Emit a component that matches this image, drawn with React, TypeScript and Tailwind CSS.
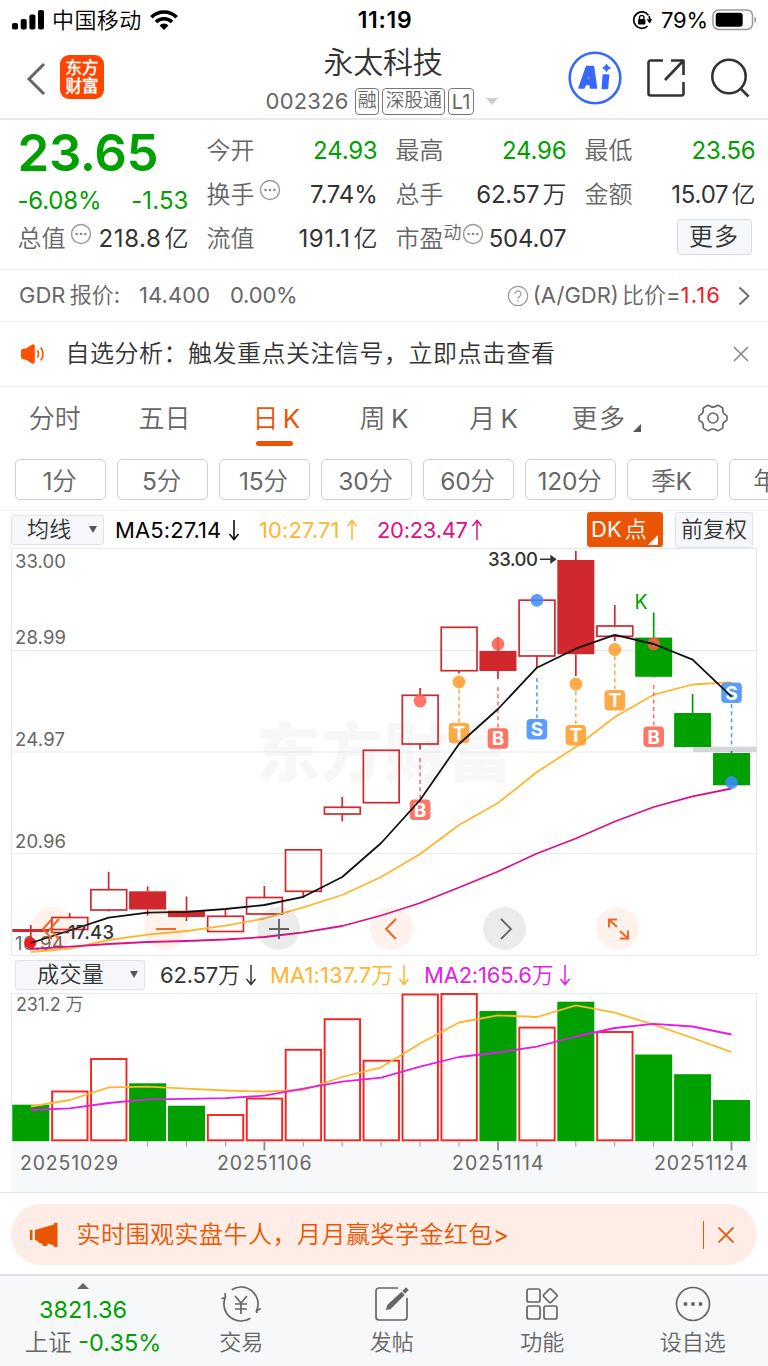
import type { ReactNode } from "react";

const STEP = 38.93;
const X0 = 30.8;
const cx = (i: number) => X0 + i * STEP;

type Candle = { kind: "hollow" | "red" | "green"; top: number; bottom: number; high: number; low: number };

const c = (kind: Candle["kind"], top: number, bottom: number, high = top, low = bottom): Candle => ({
  kind,
  top,
  bottom,
  high,
  low,
});

const candles: Candle[] = [
  c("red", 929, 932, 925, 943),
  c("hollow", 917.5, 929.5, 913),
  c("hollow", 889.7, 910, 872, 911.5),
  c("red", 891.3, 909.5, 886.5, 915.5),
  c("red", 910.7, 917, 896.5, 921),
  c("hollow", 916.3, 931.5, 909.5),
  c("hollow", 897.5, 914, 886),
  c("hollow", 849.8, 891.3, 849, 898),
  c("hollow", 807.3, 814, 797, 821.5),
  c("hollow", 750.3, 802.7),
  c("hollow", 695.3, 744, 688, 749.5),
  c("hollow", 627.3, 670.7, 627, 673.5),
  c("red", 651, 671, 637, 679),
  c("hollow", 600.2, 656, 600, 668),
  c("red", 560, 654.2, 551, 676),
  c("hollow", 626, 636.3, 605, 641),
  c("green", 637.6, 676.8, 612.6, 677.5),
  c("green", 713, 747, 694),
  c("green", 753, 785.3, 751, 787),
];

const ma5 = [943, 930.5, 917.6, 912.6, 911.8, 909, 905, 896.8, 877, 843, 800, 744, 709, 667.7, 648.7, 634.9, 644, 659.7, 696.7];
const ma10 = [952, 948.7, 940, 934.7, 931, 925.7, 918.5, 907.3, 895, 877, 854, 825, 803, 772, 747, 717, 694.7, 684.5, 682.2];
const ma20 = [949, 946.7, 944, 942, 941, 939.5, 937, 932.3, 926, 915.5, 903, 887.5, 871.5, 853.5, 838.5, 821.5, 807, 796.3, 788.5];

const volumes: [Candle["kind"], number][] = [
  ["green", 1104.7],
  ["hollow", 1091.5],
  ["hollow", 1059],
  ["green", 1083.3],
  ["green", 1105.7],
  ["hollow", 1115],
  ["hollow", 1098.6],
  ["hollow", 1049.8],
  ["hollow", 1019.2],
  ["hollow", 1060.7],
  ["hollow", 994.5],
  ["hollow", 994],
  ["green", 1011],
  ["hollow", 1027.6],
  ["green", 1001.7],
  ["hollow", 1032],
  ["green", 1054.5],
  ["green", 1074.2],
  ["green", 1100],
];
const vma1 = [1106.5, 1100, 1087.3, 1086.7, 1088.7, 1090.5, 1091.5, 1090, 1077, 1067.3, 1043.5, 1022.5, 1015.3, 1017, 1005.3, 1012.7, 1024.7, 1038, 1052.2];
const vma2 = [1110, 1108.3, 1103, 1099.3, 1098.8, 1098.2, 1095.7, 1088.7, 1081.7, 1077.7, 1066.7, 1057, 1052.5, 1046.7, 1036.5, 1028, 1023.8, 1026.5, 1034.5];

const line = (ys: number[]) => ys.map((y, i) => `${cx(i).toFixed(1)},${y}`).join(" ");

type Marker = { i: number; letter: "B" | "T" | "S"; y: number; dot: number; from: number; to: number };
const markers: Marker[] = [
  { i: 10, letter: "B", y: 809.7, dot: 701, from: 758, to: 799 },
  { i: 11, letter: "T", y: 733, dot: 682, from: 682, to: 722 },
  { i: 12, letter: "B", y: 738.5, dot: 644, from: 687, to: 728 },
  { i: 13, letter: "S", y: 729.2, dot: 600.3, from: 678, to: 718 },
  { i: 14, letter: "T", y: 735.3, dot: 684, from: 684, to: 724 },
  { i: 15, letter: "T", y: 700.3, dot: 649.5, from: 649, to: 689 },
  { i: 16, letter: "B", y: 736.7, dot: 643.7, from: 685, to: 726 },
  { i: 18, letter: "S", y: 692.7, dot: 782.5, from: 704, to: 745 },
];
const markerColor = { B: "#ff5d4d", T: "#ff9c27", S: "#3c8cff" };

function PriceChart() {
  return (
    <svg viewBox="0 548 768 408" className="block h-[408px] w-[768px]">
      <text x="256" y="776" fontSize="64" fontWeight="900" fill="#f7f7f8" textLength="256" className="font-['Noto_Sans_CJK_SC',sans-serif]">
        东方财富
      </text>
      <g stroke="#e6e9f0" strokeWidth="1.2" fill="none">
        <path d="M11.5 548V956M756.5 548V956M11.5 650.6H756.5M11.5 752H756.5M11.5 853.5H756.5" />
        <path d="M11.5 548.5H756.5M11.5 955.5H756.5" />
      </g>
      <g fontSize="18.500" fill="#666">
        <text x="15" y="568.2" textLength="51">33.00</text>
        <text x="15" y="643.8" textLength="51">28.99</text>
        <text x="15" y="746.3" textLength="50">24.97</text>
        <text x="15" y="848.3" textLength="51">20.96</text>
        <text x="15" y="949.8" textLength="49">16.94</text>
      </g>
      <rect x="693" y="746.7" width="63.5" height="5.3" fill="#d3d5da" />
      {candles.map((k, i) => {
        const color = k.kind === "green" ? "#00a000" : "#d0282c";
        const x = cx(i);
        return (
          <g key={i} stroke={color} strokeWidth="1.7">
            <path d={`M${x} ${k.high}V${k.top}M${x} ${k.bottom}V${k.low}`} />
            {k.kind === "hollow" ? (
              <rect x={x - 17.8} y={k.top} width="35.8" height={k.bottom - k.top} fill="none" />
            ) : (
              <rect x={x - 18.5} y={k.top} width="37" height={k.bottom - k.top} fill={color} stroke="none" />
            )}
          </g>
        );
      })}
      <circle cx="30.5" cy="943" r="5.8" fill="#f6171f" />
      <g fill="none" strokeWidth="1.8" strokeLinejoin="round">
        <polyline points={line(ma10)} stroke="#ffb62e" />
        <polyline points={line(ma20)} stroke="#df0f8a" />
      </g>
      <g opacity="0.85">
        {markers.map((m) => {
          const x = cx(m.i);
          const col = markerColor[m.letter];
          return (
            <g key={m.i}>
              <circle cx={x} cy={m.dot} r="6.4" fill={col} />
              <path d={`M${x} ${m.from}V${m.to}`} stroke={col} strokeWidth="1.6" strokeDasharray="4 3.3" />
              <rect x={x - 10.3} y={m.y - 10.3} width="20.6" height="20.6" rx="4" fill={col} />
              <text x={x} y={m.y + 6.9} fontSize="19" fontWeight="700" fill="#fff" textAnchor="middle">
                {m.letter}
              </text>
            </g>
          );
        })}
      </g>
      <polyline points={line(ma5)} stroke="#111" fill="none" strokeWidth="1.8" strokeLinejoin="round" />
      <text x="488" y="566.3" fontSize="18.5" fontWeight="500" fill="#333" textLength="50">33.00</text>
      <path d="M540 559.3H555M551 556l4.500 3.300-4.500 3.300z" stroke="#333" strokeWidth="1.4" fill="#333" />
      <text x="68" y="938.600" fontSize="18.500" fontWeight="500" fill="#333" textLength="46">17.43</text>
      <path d="M51 932.500H69" stroke="#333" strokeWidth="1.400" />
      <text x="634.500" y="608.500" fontSize="19.500" fill="#00a000">K</text>
    </svg>
  );
}

function VolumeChart() {
  return (
    <svg viewBox="0 993 768 199" className="block h-[199px] w-[768px]">
      <rect x="11.5" y="1141" width="745" height="51" fill="#f7f8fa" />
      <path d="M11.500 1141V993.300H756.500V1141" stroke="#e6e9f0" strokeWidth="1.200" fill="none" />
      <text x="16" y="1010.800" fontSize="18" fill="#666" textLength="67.500">231.2 万</text>
      {volumes.map(([kind, top], i) =>
        kind === "green" ? (
          <rect key={i} x={cx(i) - 18.5} y={top} width="37" height={1141.2 - top} fill="#00a000" />
        ) : (
          <rect key={i} x={cx(i) - 17.6} y={top} width="35.4" height={1140.3 - top} fill="none" stroke="#f6231f" strokeWidth="1.9" />
        ),
      )}
      <g fill="none" strokeWidth="1.800" strokeLinejoin="round">
        <polyline points={line(vma1)} stroke="#ffb62e" />
        <polyline points={line(vma2)} stroke="#e31ce8" />
      </g>
      {volumes.map((_, i) =>
        i < 3 ? null : (
          <path
            key={i}
            d={`M${cx(i)} 1141.5V${i % 6 === 0 ? 1150.5 : 1146.5}`}
            stroke={i % 6 === 0 ? "#888" : "#999"}
            strokeWidth={i % 6 === 0 ? 1.8 : 1}
          />
        ),
      )}
      <g fontSize="19.500" fill="#666">
        <text x="20" y="1170.300" textLength="98">20251029</text>
        <text x="217" y="1170.300" textLength="94.500">20251106</text>
        <text x="452" y="1170.300" textLength="91.500">20251114</text>
        <text x="654" y="1170.300" textLength="94">20251124</text>
      </g>
    </svg>
  );
}

function Arrow({ up }: { up?: boolean }) {
  return (
    <svg viewBox="0 0 12 22" className={up ? "h-[22px] w-3" : "h-[22px] w-3 rotate-180"} fill="none" stroke="currentColor" strokeWidth="1.5">
      <path d="M6 21V1.500M1.500 7 6 1.500 10.500 7" />
    </svg>
  );
}

function Dots({ className }: { className: string }) {
  return (
    <svg viewBox="0 0 22 22" className={className}>
      <circle cx="11" cy="11" r="9.500" fill="none" stroke="#999" strokeWidth="1.400" />
      <g fill="#888">
        <circle cx="6.600" cy="11" r="1.300" />
        <circle cx="11" cy="11" r="1.300" />
        <circle cx="15.400" cy="11" r="1.300" />
      </g>
    </svg>
  );
}

function Value({ value, unit, green, wide }: { value: string; unit?: string; green?: boolean; wide?: boolean }) {
  return (
    <span className={green ? "ml-auto text-[#00a000]" : "ml-auto text-[#333]"}>
      <span className={wide ? "tracking-[0.6px]" : "tracking-[-0.2px]"}>{value}</span>
      {unit && <span className="ml-[3px]">{unit}</span>}
    </span>
  );
}

type CellProps = { label: string; value: string; unit?: string; green?: boolean; wide?: boolean; extra?: ReactNode };

function Cell({ label, value, unit, green, wide, extra }: CellProps) {
  return (
    <div className="flex h-[44px] items-center text-[24px] leading-[44px] whitespace-nowrap">
      <span className="text-[#666]">{label}</span>
      {extra}
      <Value value={value} unit={unit} green={green} wide={wide} />
    </div>
  );
}

function StatusBar() {
  return (
    <div className="flex h-10 items-center text-black">
      <div className="flex flex-1 items-center pl-3">
        <svg viewBox="0 0 32 20" className="h-5 w-8">
          <rect x="0" y="13" width="6" height="6.500" rx="1.800" />
          <rect x="8.700" y="9" width="6" height="10.500" rx="1.800" />
          <rect x="17.400" y="4.500" width="6" height="15" rx="1.800" />
          <rect x="26" y="0" width="6" height="19.500" rx="1.800" />
        </svg>
        <span className="ml-2 w-[98px] text-[22px] tracking-[0.4px]">中国移动</span>
        <svg viewBox="0 0 28 20" className="h-5 w-7" fill="none" stroke="#000" strokeWidth="3.600">
          <path d="M1.400 7.200a18 18 0 0 1 25.200 0" />
          <path d="M6 12a11.500 11.500 0 0 1 16 0" />
          <path d="M14 20l-4.500-4.600a6.500 6.500 0 0 1 9 0z" fill="#000" stroke="none" />
        </svg>
      </div>
      <span className="text-[23px] font-semibold tracking-[0.7px]">11:19</span>
      <div className="flex flex-1 items-center justify-end pr-[10px]">
        <svg viewBox="0 0 20 20" className="mr-[9px] size-5" fill="none" stroke="#000" strokeWidth="1.700">
          <path d="M16.500 5.200A8.200 8.200 0 1 0 15.600 16" />
          <path d="M17.500 12.500A8.200 8.200 0 0 0 17 6" />
          <path d="M14.600 9.200h5.800l-2.900 4z" fill="#000" stroke="none" />
          <rect x="6" y="9" width="7.400" height="5.600" rx="1" fill="#000" stroke="none" />
          <path d="M7.500 9V7.500a2.200 2.200 0 0 1 4.400 0V9" strokeWidth="1.300" />
        </svg>
        <span className="w-[51px] text-[22px] tracking-[-0.2px]">79%</span>
        <svg viewBox="0 0 46 22" className="h-[22px] w-[46px]">
          <rect x="1" y="1" width="39.500" height="19.500" rx="5.500" fill="none" stroke="#999" strokeWidth="1.500" />
          <rect x="3.700" y="3.700" width="27" height="14" rx="3" />
          <path d="M42.500 7.500a4 4 0 0 1 0 6.500z" fill="#888" />
        </svg>
      </div>
    </div>
  );
}

function Header() {
  return (
    <header className="grid h-20 grid-cols-[1fr_auto_1fr] border-b-2 border-[#eaeaea]">
      <div className="flex items-center pb-1 pl-[26px]">
        <svg viewBox="0 0 20 32" className="mt-[3px] h-8 w-5" fill="none" stroke="#666" strokeWidth="3">
          <path d="M18 1 3 16l15 15" />
        </svg>
        <div className="ml-[14px] flex size-[44px] flex-col items-center justify-center rounded-[9px] bg-[#ff4400] text-[16.500px] leading-[18px] font-bold text-white">
          <span>东方</span>
          <span>财富</span>
        </div>
      </div>
      <div className="flex flex-col items-center text-[#333]">
        <h1 className="mt-[3px] pr-[2px] text-[30px] leading-[38px] tracking-[-0.2px]">永太科技</h1>
        <div className="mt-[7px] flex h-[27px] items-center gap-[3px] pr-1 text-[#666]">
          <span className="mr-[3px] text-[22px] tracking-[0.2px]">002326</span>
          <span className="flex h-[27px] items-center rounded-[4px] border border-[#777] px-[2px] text-[19px] tracking-[-0.2px]">融</span>
          <span className="flex h-[27px] items-center rounded-[4px] border border-[#777] px-[2px] text-[19px] tracking-[-0.2px]">深股通</span>
          <span className="flex h-[27px] items-center rounded-[4px] border border-[#777] px-[3px] text-[20px]">L1</span>
          <span className="ml-[9px] border-x-[6.500px] border-t-[7px] border-x-transparent border-t-[#ccc]" />
        </div>
      </div>
      <div className="flex items-center justify-end gap-6 pr-[18px] pb-[3px]">
        <svg viewBox="0 0 54 54" className="size-[54px]">
          <circle cx="27" cy="27" r="25.300" fill="none" stroke="#3768fa" strokeWidth="2.600" />
          <g fill="#3768fa" stroke="#3768fa" strokeLinejoin="round">
            <path fillRule="evenodd" strokeWidth="1.500" d="M18.500 15.500h7l3 21.500h-6l-.3-3.500h-4.700L16 37h-5zM21.300 21.500l-2.300 7h3z" />
            <path strokeWidth="1.500" d="M35.300 24h5.200l-1 13.500h-5.200z" />
            <path d="M38.500 13q.9 3 3.900 3.900-3 .9-3.900 3.900-.9-3-3.900-3.900 3-.9 3.900-3.900z" strokeWidth=".8" />
          </g>
        </svg>
        <svg viewBox="0 0 40 40" className="size-10" fill="none" stroke="#333" strokeWidth="2.600" strokeLinejoin="round">
          <path d="M17 2.500H4.500a2 2 0 0 0-2 2v31a2 2 0 0 0 2 2h31a2 2 0 0 0 2-2V24" />
          <path d="M25 2.500h12.500V17M37.500 2.500 19 22" />
        </svg>
        <svg viewBox="0 0 40 40" className="size-10" fill="none" stroke="#333" strokeWidth="2.600">
          <circle cx="19" cy="18.500" r="16.700" />
          <path d="M30.500 30.500 38.500 38.500" />
        </svg>
      </div>
    </header>
  );
}

function Quote() {
  return (
    <section className="grid h-[150px] grid-cols-[repeat(4,171px)] gap-x-[18px] border-b border-[#eee] pt-2 pl-[17.500px]">
      <div className="whitespace-nowrap">
        <div className="h-[51px] text-[51px] leading-[50px] font-semibold tracking-[-0.4px] text-[#00a000]">23.65</div>
        <div className="flex h-[44px] items-center justify-between text-[24px] tracking-[-0.2px] text-[#00a000]">
          <span>-6.08%</span>
          <span className="tracking-[0.1px]">-1.53</span>
        </div>
        <div className="flex h-[32px] items-center text-[24px]">
          <span className="text-[#666]">总值</span>
          <Dots className="mb-[10px] ml-1 size-[22px]" />
          <Value value="218.8" unit="亿" wide />
        </div>
      </div>
      <div className="pt-px">
        <Cell label="今开" value="24.93" green />
        <Cell label="换手" value="7.74%" extra={<Dots className="mb-[10px] ml-1 size-[22px]" />} />
        <Cell label="流值" value="191.1" unit="亿" wide />
      </div>
      <div className="pt-px">
        <Cell label="最高" value="24.96" green />
        <Cell label="总手" value="62.57" unit="万" />
        <Cell
          label="市盈"
          value="504.07"
          extra={
            <>
              <span className="mb-3 text-[18px] text-[#666]">动</span>
              <Dots className="mb-[10px] size-[22px]" />
            </>
          }
        />
      </div>
      <div className="pt-px">
        <Cell label="最低" value="23.56" green />
        <Cell label="金额" value="15.07" unit="亿" />
        <div className="flex h-10 items-center justify-end pr-1">
          <button className="h-9 w-[75px] rounded-[4px] border border-[#d9dde6] bg-[#f6f7fa] text-[24px] leading-[34px] tracking-[1px] text-[#333]">更多</button>
        </div>
      </div>
    </section>
  );
}

function GdrRow() {
  return (
    <section className="flex h-[52px] items-center border-b border-[#eee] pr-[18px] pl-[19px] text-[22px] whitespace-nowrap text-[#666]">
      <span className="w-[120px] [word-spacing:-2px]">GDR 报价:</span>
      <span className="w-[91px] tracking-[0.1px]">14.400</span>
      <span className="tracking-[-0.2px]">0.00%</span>
      <svg viewBox="0 0 22 22" className="ml-auto size-[22px]" fill="none" stroke="#999" strokeWidth="1.200">
        <circle cx="11" cy="11" r="9.700" />
        <path d="M8 9a3 3 0 1 1 4.600 2.500c-1 .7-1.600 1.200-1.600 2.300M11 15v1.500" />
      </svg>
      <span className="ml-1 [word-spacing:-3px]">(A/GDR) 比价=</span>
      <span className="tracking-[1.100px] text-[#f6171f]">1.16</span>
      <svg viewBox="0 0 12 20" className="ml-[17px] h-5 w-3" fill="none" stroke="#666" strokeWidth="1.800">
        <path d="M1.500 1.500 10.500 10l-9 8.500" />
      </svg>
    </section>
  );
}

function Notice() {
  return (
    <section className="flex h-[65px] items-center border-b border-[#f0f0f0] pr-[19px] pl-[21px]">
      <svg viewBox="0 0 24 20" className="h-5 w-6">
        <path d="M0 7q0-2 2-2.300l3.500-.5L11 .6Q13.500-.5 13.800 2v16q-.3 2.500-2.800 1.400L5.500 16 2 15.300Q0 15 0 13z" fill="#ff5000" />
        <path d="M16.500 6.500q2 3.500 0 7M19.800 3.500q4.500 6.500 0 13" stroke="#ff5000" strokeWidth="1.600" fill="none" />
      </svg>
      <span className="ml-[20.500px] text-[24px] tracking-[0.5px] whitespace-nowrap text-[#333]">自选分析：触发重点关注信号，立即点击查看</span>
      <svg viewBox="0 0 16 16" className="ml-auto size-4" stroke="#888" strokeWidth="1.600">
        <path d="M1 1l14 14M15 1 1 15" />
      </svg>
    </section>
  );
}

function Tabs() {
  const items = ["分时", "五日", "日 K", "周 K", "月 K"];
  return (
    <section>
      <div className="grid h-[72px] grid-cols-7 text-[26px] text-[#666]">
        {items.map((t, i) => (
          <div key={t} className={i === 2 ? "flex flex-col items-center text-[#ea5504]" : "flex flex-col items-center"}>
            <span className={i === 2 ? "mt-3 h-10 pl-1 leading-10 whitespace-nowrap [word-spacing:-3px]" : "mt-3 h-10 leading-10 whitespace-nowrap [word-spacing:-2px]"}>{t}</span>
            {i === 2 && <span className="mt-[2px] h-[5px] w-[37px] rounded-full bg-[#ea5504]" />}
          </div>
        ))}
        <div className="flex justify-center pl-[6px]">
          <span className="mt-3 h-10 leading-10 tracking-[1.500px] whitespace-nowrap">更多</span>
          <svg viewBox="0 0 8 8" className="mt-[37px] ml-[7px] size-2">
            <path d="M8 0v8H0z" fill="#555" />
          </svg>
        </div>
        <div className="flex justify-center">
          <svg viewBox="0 0 30 28" className="mt-[17px] h-7 w-[30px]" fill="none" stroke="#666" strokeWidth="1.600" strokeLinejoin="round">
            <path d="M9.500 1.500Q11 1 12 2.300q3 1.700 6 0Q19 1 20.500 1.500L24 3.500q1.300 1 .8 2.500-.3 3.500 3 5 1.200.5 1.200 1.800v2.600q0 1.200-1.200 1.700-3.300 1.500-3 5 .5 1.500-.8 2.500l-3.500 2q-1.500.5-2.500-.8-3-1.700-6 0-1 1.300-2.500.8L6 24.600q-1.300-1-.8-2.500.3-3.500-3-5Q1 16.600 1 15.400v-2.600Q1 11.500 2.200 11q3.300-1.500 3-5Q4.700 4.500 6 3.500z" />
            <circle cx="15" cy="14" r="5" />
          </svg>
        </div>
      </div>
      <div className="flex h-[52px] gap-[11px] overflow-hidden border-b border-[#f0f0f0] pl-[15px]">
        {["1分", "5分", "15分", "30分", "60分", "120分", "季K", "年K"].map((t) => (
          <div key={t} className="h-[41px] w-[91px] shrink-0 rounded-[5px] border border-[#d0d0d0] pr-[2px] text-center text-[24.500px] leading-[42px] tracking-[-0.2px] text-[#666]">
            {t}
          </div>
        ))}
      </div>
    </section>
  );
}

function MaRow() {
  return (
    <div className="flex h-[37px] items-center pl-[11px] text-[22px] whitespace-nowrap">
      <div className="flex h-[30px] w-[93px] items-center rounded-[3px] border border-[#dfe2e9] bg-[#f6f7fa] pl-[15px] text-[#333]">
        <span className="tracking-[0.2px]">均线</span>
        <span className="ml-[18px] border-x-[4.500px] border-t-[7.500px] border-x-transparent border-t-[#555]" />
      </div>
      <div className="ml-[11px] flex w-[144px] items-center gap-[6px] pt-px text-black">
        <span className="w-[107px] tracking-[0.1px]">MA5:27.14</span>
        <Arrow />
      </div>
      <div className="flex w-[118px] items-center gap-[6px] pt-px text-[#ffb62e]">
        <span className="tracking-[0.1px]">10:27.71</span>
        <Arrow up />
      </div>
      <div className="flex items-center gap-[3px] pt-px text-[#df0f8a]">
        <span className="tracking-[-0.3px]">20:23.47</span>
        <Arrow up />
      </div>
      <div className="ml-auto flex h-[35px] w-[76px] items-center rounded-[3px] bg-[#ea5504] pl-1 text-white">
        <span className="[word-spacing:-3px]">DK 点</span>
        <svg viewBox="0 0 10 10" className="mt-5 ml-px size-[10px]">
          <path d="M10 0v10H0z" fill="#fff" />
        </svg>
      </div>
      <div className="mr-[15px] ml-3 flex h-9 w-[78px] items-center justify-center rounded-[3px] border border-[#dfe2e9] bg-[#f6f7fa] text-[#333]">前复权</div>
    </div>
  );
}

function RoundButton({ gray, children }: { gray?: boolean; children: ReactNode }) {
  return (
    <button
      className={
        gray
          ? "flex size-[43px] items-center justify-center rounded-full bg-black/8 text-[#666]"
          : "flex size-[43px] items-center justify-center rounded-full bg-[#ff5000]/8 text-[#f26322]"
      }
    >
      <svg viewBox="0 0 24 24" className="size-6" fill="none" stroke="currentColor" strokeWidth="1.900">
        {children}
      </svg>
    </button>
  );
}

function ChartSection() {
  return (
    <section className="relative">
      <PriceChart />
      <div className="absolute top-[359px] left-[31px] flex gap-[70px]">
        <RoundButton>
          <path d="M11 2 2 12l9 10M18 2 9 12l9 10" />
        </RoundButton>
        <RoundButton>
          <path d="M2 12h20" />
        </RoundButton>
        <RoundButton gray>
          <path d="M2 12h20M12 2v20" />
        </RoundButton>
        <RoundButton>
          <path d="M16 2 6 12l10 10" />
        </RoundButton>
        <RoundButton gray>
          <path d="M8 2l10 10L8 22" />
        </RoundButton>
        <RoundButton>
          <path d="M3 10.500V2.500h8M3 2.500l8 7.500M22 13.500v8h-8M22 21.500l-8-7.500" />
        </RoundButton>
      </div>
    </section>
  );
}

function VolumeHeader() {
  return (
    <div className="flex h-[37px] items-center pl-[15px] text-[22px] whitespace-nowrap">
      <div className="flex h-[30px] w-[130px] items-center rounded-[3px] border border-[#dfe2e9] bg-[#f6f7fa] pl-[21px] text-[#333]">
        <span className="tracking-[0.4px]">成交量</span>
        <span className="ml-[26px] border-x-[4.500px] border-t-[7.500px] border-x-transparent border-t-[#555]" />
      </div>
      <div className="ml-[15px] flex w-[110px] items-center gap-[5px] pt-px text-[#333]">
        <span className="tracking-[-0.2px]">62.57万</span>
        <Arrow />
      </div>
      <div className="flex w-[154px] items-center gap-[5px] pt-px text-[#ffb62e]">
        <span className="tracking-[0.1px]">MA1:137.7万</span>
        <Arrow />
      </div>
      <div className="flex items-center gap-[5px] pt-px text-[#e31ce8]">
        <span className="tracking-[-0.2px]">MA2:165.6万</span>
        <Arrow />
      </div>
    </div>
  );
}

function Banner() {
  return (
    <section className="h-[82px] border-t border-[#e4e4e8] px-[11px] pt-[11px]">
      <div className="flex h-[61px] items-center rounded-full bg-[#fdede6] pr-[23px] pl-[18px] text-[#ea5504]">
        <svg viewBox="0 0 30 26" className="h-[26px] w-[30px]" fill="#ea5504">
          <path d="M1 8h2.500v10H1zM6 8l19-5.500V1h3.500v24H25v-1.500l-6-2-1 2.500h-4l-1-2.300-3-.7-.5-1.500L6 18z" />
        </svg>
        <span className="ml-[17.500px] pt-px text-[24px] tracking-[0.5px]">实时围观实盘牛人，月月赢奖学金红包&gt;</span>
        <span className="ml-auto h-7 w-px bg-[#ea5504]" />
        <svg viewBox="0 0 16 16" className="ml-[14px] size-4" stroke="#ea5504" strokeWidth="1.700">
          <path d="M.5.500l15 15M15.500.500l-15 15" />
        </svg>
      </div>
    </section>
  );
}

function NavItem({ label, children }: { label: string; children: ReactNode }) {
  return (
    <div className="flex flex-col items-center pt-2 text-[22px] text-[#666]">
      <svg viewBox="0 0 40 40" className="size-10" fill="none" stroke="#666" strokeWidth="1.700">
        {children}
      </svg>
      <span className="mt-[3px] leading-[30px]">{label}</span>
    </div>
  );
}

function BottomNav() {
  return (
    <nav className="grid h-[92px] grid-cols-[166px_repeat(4,150.500px)] border-t-2 border-[#e2e3e8] bg-[#f7f8fa]">
      <div className="flex flex-col items-center pt-[7px] text-[23.500px]">
        <span className="border-x-[6.500px] border-b-[6.500px] border-x-transparent border-b-[#666]" />
        <span className="mt-1 leading-[33px] text-[#00a000]">3821.36</span>
        <span className="pl-5 leading-[33px] whitespace-nowrap text-[#666]">
          上证 <span className="text-[#00a000]">-0.35%</span>
        </span>
      </div>
      <NavItem label="交易">
        <path d="M10.700 5.800A17 17 0 0 1 35.800 26.400l4-1.700M29.300 34.200A17 17 0 0 1 4.200 13.600L.500 14.500M4.200 9v4.600M35.800 26.400v2.500" />
        <path d="m14 12 6 7 6-7M20 19v11M14 20h12M14 25h12" />
      </NavItem>
      <NavItem label="发帖">
        <path d="M26 4H7a3 3 0 0 0-3 3v26a3 3 0 0 0 3 3h25a3 3 0 0 0 3-3V14" />
        <path d="m15 25 1-3.500L29.500 9l2 2L18 24.500zM31.500 7l2.500-2.500 1.500 1.500L33 8.500z" fill="#666" />
      </NavItem>
      <NavItem label="功能">
        <rect x="5" y="5" width="13" height="13" rx="2" />
        <rect x="5" y="22" width="13" height="13" rx="2" />
        <rect x="22" y="22" width="13" height="13" rx="2" />
        <rect x="23" y="6.500" width="10.500" height="10.500" rx="1.500" transform="rotate(45 28.300 11.700)" />
      </NavItem>
      <NavItem label="设自选">
        <circle cx="20" cy="20" r="16.500" />
        <g fill="#666" stroke="none">
          <circle cx="12.500" cy="20" r="2" />
          <circle cx="20" cy="20" r="2" />
          <circle cx="27.500" cy="20" r="2" />
        </g>
      </NavItem>
    </nav>
  );
}

export default function App() {
  return (
    <div className="h-[1366px] w-[768px] overflow-hidden bg-white font-['Inter','Noto_Sans_CJK_SC_DemiLight','Noto_Sans_CJK_SC',sans-serif]">
      <StatusBar />
      <Header />
      <Quote />
      <GdrRow />
      <Notice />
      <Tabs />
      <MaRow />
      <ChartSection />
      <VolumeHeader />
      <VolumeChart />
      <Banner />
      <BottomNav />
    </div>
  );
}
